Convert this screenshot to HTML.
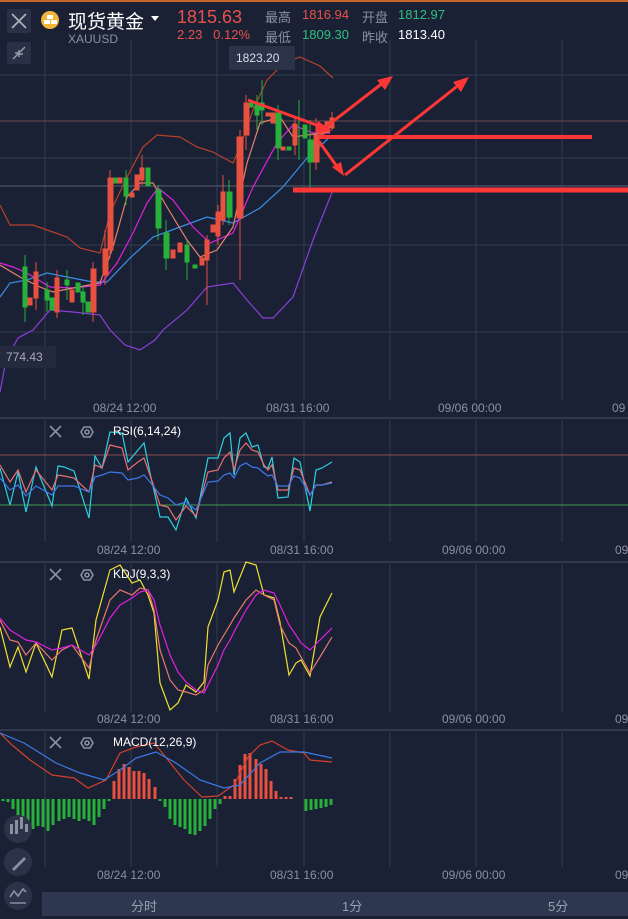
<!DOCTYPE html>
<html><head><meta charset="utf-8"><style>
*{margin:0;padding:0}
body{width:628px;height:919px;background:#1b2135;overflow:hidden;position:relative;font-family:"Liberation Sans","Noto Sans CJK SC",sans-serif}
.t{position:absolute;white-space:nowrap}
</style></head><body>
<svg width="628" height="919" style="position:absolute;left:0;top:0">
<rect x="0" y="0" width="628" height="2" fill="#c8662a"/>
<g stroke="#323a50" stroke-width="1">
<line x1="45" y1="40" x2="45" y2="400"/><line x1="131" y1="40" x2="131" y2="400"/><line x1="217" y1="40" x2="217" y2="400"/><line x1="304" y1="40" x2="304" y2="400"/><line x1="390" y1="40" x2="390" y2="400"/><line x1="476" y1="40" x2="476" y2="400"/><line x1="562" y1="40" x2="562" y2="400"/>
<line x1="45" y1="420" x2="45" y2="542"/><line x1="131" y1="420" x2="131" y2="542"/><line x1="217" y1="420" x2="217" y2="542"/><line x1="304" y1="420" x2="304" y2="542"/><line x1="390" y1="420" x2="390" y2="542"/><line x1="476" y1="420" x2="476" y2="542"/><line x1="562" y1="420" x2="562" y2="542"/>
<line x1="45" y1="564" x2="45" y2="712"/><line x1="131" y1="564" x2="131" y2="712"/><line x1="217" y1="564" x2="217" y2="712"/><line x1="304" y1="564" x2="304" y2="712"/><line x1="390" y1="564" x2="390" y2="712"/><line x1="476" y1="564" x2="476" y2="712"/><line x1="562" y1="564" x2="562" y2="712"/>
<line x1="45" y1="732" x2="45" y2="867"/><line x1="131" y1="732" x2="131" y2="867"/><line x1="217" y1="732" x2="217" y2="867"/><line x1="304" y1="732" x2="304" y2="867"/><line x1="390" y1="732" x2="390" y2="867"/><line x1="476" y1="732" x2="476" y2="867"/><line x1="562" y1="732" x2="562" y2="867"/>
<line x1="0" y1="75" x2="628" y2="75"/><line x1="0" y1="158" x2="628" y2="158"/><line x1="0" y1="245" x2="628" y2="245"/><line x1="0" y1="332" x2="628" y2="332"/>
</g>
<line x1="0" y1="121" x2="628" y2="121" stroke="#6a4a50"/>
<line x1="0" y1="186" x2="628" y2="186" stroke="#5a6075"/>
<g stroke="#4a5166"><line x1="0" y1="418" x2="628" y2="418"/><line x1="0" y1="562" x2="628" y2="562"/><line x1="0" y1="730" x2="628" y2="730"/></g>
<line x1="0" y1="455" x2="628" y2="455" stroke="#8a4a50"/>
<line x1="0" y1="505" x2="628" y2="505" stroke="#3f9a4a"/>

<g fill="none" stroke-width="1.2">
<polyline stroke="#b8402a" points="0,205 10,225 33,225 67,237 80,248 100,253 110,213 127,177 143,147 157,135 180,137 197,147 213,152 233,163 240,147 253,110 267,80 285,62 300,57 320,66 333,78"/>
<polyline stroke="#8a3fd8" points="0,392 6,360 18,338 33,330 50,310 73,312 100,315 110,330 125,345 140,350 155,340 163,330 187,310 207,287 233,283 247,300 263,318 273,318 293,297 313,240 333,190"/>
<polyline stroke="#3a8ee8" points="0,297 10,283 27,280 47,273 67,277 93,282 107,282 130,258 153,237 180,227 207,217 233,223 260,208 283,187 307,158 330,137"/>
<polyline stroke="#e020e0" points="0,263 13,267 27,273 50,287 73,288 100,285 117,263 133,233 147,203 158,188 173,200 193,227 210,243 233,233 253,187 277,143 293,125 313,133 330,133"/>
<polyline stroke="#e88070" points="0,265 20,277 40,287 53,292 73,288 100,283 113,247 127,197 140,183 153,183 167,207 187,240 200,257 217,250 233,227 247,163 260,123 280,117 293,137 307,135 330,132"/>
</g>
<g stroke="#27b03a" fill="#27b03a" stroke-width="1">
<line x1="25" y1="255" x2="25" y2="322"/><rect x="23" y="267" width="4" height="40"/>
<rect x="45" y="290" width="4" height="10"/><line x1="47" y1="282" x2="47" y2="312"/>
<rect x="50" y="298" width="4" height="12"/>
<rect x="65" y="280" width="4" height="5"/><line x1="67" y1="270" x2="67" y2="300"/>
<rect x="76" y="283" width="4" height="9"/><rect x="81" y="292" width="4" height="10"/><rect x="86" y="302" width="4" height="10"/><line x1="83" y1="285" x2="83" y2="315"/>
<rect x="113" y="178" width="4" height="5"/><rect x="124" y="178" width="4" height="18"/><line x1="126" y1="170" x2="126" y2="205"/>
<rect x="146" y="168" width="4" height="18"/>
<line x1="158" y1="185" x2="158" y2="240"/><rect x="156" y="190" width="5" height="38"/>
<line x1="166" y1="220" x2="166" y2="270"/><rect x="164" y="233" width="5" height="25"/>
<rect x="185" y="245" width="4" height="17"/><line x1="187" y1="240" x2="187" y2="280"/>
<rect x="193" y="265" width="4" height="3"/>
<rect x="227" y="192" width="5" height="25"/><line x1="229" y1="180" x2="229" y2="225"/>
<rect x="249" y="103" width="4" height="4"/><rect x="255" y="103" width="4" height="12"/><line x1="257" y1="95" x2="257" y2="130"/><rect x="260" y="103" width="4" height="7"/><line x1="262" y1="80" x2="262" y2="125"/>
<line x1="278" y1="105" x2="278" y2="160"/><rect x="276" y="113" width="5" height="35"/>
<rect x="287" y="147" width="4" height="3"/><line x1="299" y1="100" x2="299" y2="160"/>
<rect x="303" y="125" width="4" height="13"/><line x1="310" y1="120" x2="310" y2="188"/><rect x="308" y="140" width="5" height="22"/>
</g>
<g stroke="#e8503f" fill="#e8503f" stroke-width="1">
<rect x="28" y="298" width="4" height="7"/><rect x="34" y="272" width="4" height="26"/><line x1="36" y1="262" x2="36" y2="310"/>
<line x1="57" y1="270" x2="57" y2="318"/><rect x="55" y="278" width="4" height="34"/>
<rect x="70" y="290" width="4" height="12"/>
<line x1="93" y1="262" x2="93" y2="322"/><rect x="91" y="269" width="5" height="43"/>
<line x1="105" y1="230" x2="105" y2="285"/><rect x="103" y="249" width="5" height="26"/>
<line x1="110" y1="170" x2="110" y2="258"/><rect x="108" y="178" width="5" height="72"/>
<rect x="118" y="178" width="4" height="5"/><rect x="130" y="193" width="4" height="4"/><rect x="135" y="175" width="4" height="15"/>
<line x1="142" y1="155" x2="142" y2="185"/><rect x="140" y="168" width="4" height="12"/>
<rect x="171" y="250" width="4" height="8"/><rect x="178" y="243" width="4" height="9"/>
<rect x="200" y="258" width="4" height="7"/><line x1="207" y1="235" x2="207" y2="305"/><rect x="205" y="240" width="4" height="20"/>
<rect x="211" y="225" width="4" height="7"/><line x1="218" y1="205" x2="218" y2="245"/><rect x="216" y="212" width="4" height="24"/>
<line x1="223" y1="175" x2="223" y2="225"/><rect x="221" y="192" width="4" height="28"/>
<line x1="240" y1="130" x2="240" y2="280"/><rect x="237" y="137" width="6" height="81"/>
<line x1="246" y1="95" x2="246" y2="150"/><rect x="244" y="103" width="5" height="32"/>
<rect x="266" y="113" width="4" height="3"/><rect x="271" y="113" width="4" height="10"/>
<rect x="281" y="147" width="4" height="3"/>
<line x1="295" y1="118" x2="295" y2="155"/><rect x="293" y="124" width="4" height="21"/>
<line x1="316" y1="118" x2="316" y2="170"/><rect x="314" y="135" width="5" height="27"/>
<rect x="320" y="128" width="4" height="7"/><rect x="325" y="122" width="4" height="10"/><rect x="330" y="118" width="4" height="10"/><line x1="332" y1="112" x2="332" y2="130"/>
</g>
<g stroke="#ff3636" stroke-width="3" fill="#ff3636">
<line x1="318" y1="137" x2="592" y2="137" stroke-width="4"/>
<line x1="293" y1="190" x2="628" y2="190" stroke-width="5"/>
<line x1="248" y1="100" x2="322" y2="127"/><polygon points="332,131 318,121 315,132" stroke="none"/>
<line x1="318" y1="133" x2="384" y2="82"/><polygon points="393,76 377,80 385,90" stroke="none"/>
<line x1="318" y1="140" x2="338" y2="168"/><polygon points="344,176 332,167 341,162" stroke="none"/>
<line x1="345" y1="175" x2="460" y2="84"/><polygon points="469,77 453,82 461,92" stroke="none"/>
</g>
<rect x="229" y="46" width="66" height="24" rx="2" fill="#2b3349"/>
<rect x="0" y="346" width="56" height="22" fill="#232a3e"/>

<g fill="none" stroke-width="1.2">
<polyline stroke="#2ad0e0" points="0,468 10,505 18,472 26,512 36,467 52,506 58,466 64,467 74,471 89,518 95,456 102,468 110,432 122,433 128,462 138,450 144,443 150,473 160,517 168,517 176,530 186,498 196,518 208,458 218,458 224,438 230,433 234,475 240,438 246,433 252,447 258,445 264,467 268,468 272,457 278,498 288,497 294,458 300,462 310,511 316,470 322,468 332,462"/>
<polyline stroke="#e87070" points="0,465 10,482 18,470 26,492 36,470 52,490 58,475 64,476 74,478 89,492 95,465 102,468 110,445 122,448 128,470 138,462 144,458 150,475 160,505 168,507 176,520 186,506 196,516 208,472 218,470 224,458 230,452 234,470 240,450 246,443 252,450 258,452 264,465 268,470 272,465 278,490 288,490 294,468 300,470 310,495 316,485 322,485 332,482"/>
<polyline stroke="#3a7ae8" points="0,478 10,490 18,485 26,496 36,486 52,495 58,486 64,486 74,486 89,492 95,477 102,475 110,472 122,473 128,480 138,478 144,475 150,482 160,495 168,498 176,505 186,502 196,510 208,482 218,481 224,475 230,473 234,478 240,466 246,463 252,467 258,468 264,473 268,476 272,475 278,486 288,486 294,476 300,478 310,495 316,485 322,485 332,483"/>
</g>
<g fill="none" stroke-width="1.2">
<polyline stroke="#f0e030" points="0,627 10,667 18,647 26,672 36,643 52,677 62,630 72,628 89,679 96,620 110,570 120,565 132,583 140,580 148,595 154,613 160,683 170,710 178,703 186,685 196,692 204,682 208,627 218,600 224,572 230,570 234,592 246,562 256,565 264,595 274,598 280,622 289,675 296,663 301,660 310,676 320,617 332,593"/>
<polyline stroke="#e87870" points="0,620 10,640 18,642 26,655 36,643 52,660 62,650 72,645 89,668 96,640 110,600 120,590 132,595 140,588 148,590 154,610 160,650 170,680 178,690 186,692 196,695 204,690 208,665 218,645 224,635 230,625 234,618 246,600 256,590 264,595 274,600 280,625 289,643 296,648 301,657 310,673 320,657 332,637"/>
<polyline stroke="#e020e0" points="0,618 10,630 18,635 26,640 36,642 52,650 62,648 72,645 89,655 96,645 110,618 120,605 132,598 140,592 148,590 154,600 160,625 170,655 178,672 186,682 196,690 204,693 208,685 218,665 224,650 230,640 234,632 246,610 256,595 264,590 274,593 280,605 289,625 296,635 301,643 310,650 320,640 332,628"/>
</g>
<path stroke="#27b03a" stroke-width="3" d="M3,799v2M8,799v3M13,799v10M18,799v18M23,799v25M28,799v28M33,799v30M38,799v27M43,799v28M48,799v32M53,799v26M59,799v22M64,799v20M69,799v18M74,799v20M79,799v22M84,799v20M89,799v22M94,799v26M99,799v18M104,799v10M109,799v2M160,799v2M165,799v8M170,799v20M175,799v26M180,799v28M185,799v30M190,799v35M195,799v36M200,799v32M205,799v27M210,799v20M215,799v10M220,799v5M306,799v12M311,799v11M316,799v10M321,799v9M326,799v8M331,799v6"/>
<path stroke="#e8503f" stroke-width="3" d="M114,799v-18M119,799v-30M124,799v-35M129,799v-32M134,799v-28M139,799v-28M144,799v-26M149,799v-20M155,799v-12M225,799v-3M230,799v-3M235,799v-20M240,799v-34M245,799v-45M250,799v-46M256,799v-40M261,799v-35M266,799v-30M271,799v-18M276,799v-8M281,799v-2M286,799v-2M291,799v-2"/>
<g fill="none" stroke-width="1.2">
<polyline stroke="#d0402a" points="0,733 12,745 30,760 52,775 74,778 88,788 106,780 120,753 136,747 154,743 168,760 184,780 202,797 218,796 234,785 248,757 260,745 272,741 288,750 304,753 310,760 332,762"/>
<polyline stroke="#3a7ae8" points="0,733 24,743 56,763 80,773 104,780 120,770 136,758 156,752 176,763 200,780 224,788 240,785 260,763 280,752 304,752 332,758"/>
</g>
<g stroke="#8a90a2" stroke-width="1.6" fill="none">
<path d="M50,426l11,11M61,426l-11,11"/><path d="M50,569l11,11M61,569l-11,11"/><path d="M50,737l11,11M61,737l-11,11"/>
<polygon points="81,432 84,427 90,427 93,432 90,437 84,437"/><circle cx="87" cy="432" r="2"/>
<polygon points="81,575 84,570 90,570 93,575 90,580 84,580"/><circle cx="87" cy="575" r="2"/>
<polygon points="81,743 84,738 90,738 93,743 90,748 84,748"/><circle cx="87" cy="743" r="2"/>
</g>
<rect x="7" y="9" width="24" height="24" rx="2" fill="#2a3146"/>
<path d="M12,14l14,14M26,14l-14,14" stroke="#aab0bd" stroke-width="1.8"/>
<rect x="7" y="42" width="24" height="22" rx="2" fill="#2a3146"/>
<path d="M13,59l5,-5M25,47l-5,5M15,53h4v4M23,54h-4v-4" stroke="#9aa0ad" stroke-width="1.4" fill="none"/>
<circle cx="50" cy="20" r="9" fill="#f2b43a"/>
<rect x="47" y="15" width="6" height="4" fill="#fff"/><rect x="44" y="20" width="6" height="4" fill="#fff"/><rect x="51" y="20" width="6" height="4" fill="#fff"/>
<polygon points="151,16 159,16 155,21" fill="#fff"/>
<circle cx="18" cy="829" r="14" fill="#2c3348"/><circle cx="18" cy="862" r="14" fill="#2c3348"/><circle cx="18" cy="896" r="14" fill="#2c3348"/>
<g fill="#8a90a2"><rect x="10" y="824" width="3" height="10"/><rect x="15" y="820" width="3" height="14"/><rect x="20" y="817" width="3" height="12"/><rect x="25" y="824" width="3" height="8"/></g>
<path d="M12,869l12,-12l2,2l-12,12z" fill="#8a90a2"/>
<path d="M10,897l4,-6l4,5l5,-7l3,3M10,903h16" stroke="#8a90a2" stroke-width="1.6" fill="none"/>
<rect x="42" y="892" width="586" height="24" fill="#2d3750"/>
</svg>
<div class="t" style="left:68px;top:7px;font-size:19px;color:#fff">现货黄金</div>
<div class="t" style="left:68px;top:32px;font-size:12px;color:#8a90a0">XAUUSD</div>
<div class="t" style="left:177px;top:7px;font-size:18px;color:#e8504a">1815.63</div>
<div class="t" style="left:177px;top:27px;font-size:13px;color:#e8504a">2.23&nbsp;&nbsp;&nbsp;0.12%</div>
<div class="t" style="left:265px;top:7px;font-size:13px;color:#8a90a0">最高</div>
<div class="t" style="left:302px;top:7px;font-size:13px;color:#e8504a">1816.94</div>
<div class="t" style="left:362px;top:7px;font-size:13px;color:#8a90a0">开盘</div>
<div class="t" style="left:398px;top:7px;font-size:13px;color:#2cc080">1812.97</div>
<div class="t" style="left:265px;top:27px;font-size:13px;color:#8a90a0">最低</div>
<div class="t" style="left:302px;top:27px;font-size:13px;color:#2cc080">1809.30</div>
<div class="t" style="left:362px;top:27px;font-size:13px;color:#8a90a0">昨收</div>
<div class="t" style="left:398px;top:27px;font-size:13px;color:#fff">1813.40</div>
<div class="t" style="left:236px;top:51px;font-size:12px;color:#dde">1823.20</div>
<div class="t" style="left:6px;top:350px;font-size:12px;color:#aab">774.43</div>
<div class="t" style="left:93px;top:401px;font-size:12px;color:#8a90a0">08/24 12:00</div>
<div class="t" style="left:266px;top:401px;font-size:12px;color:#8a90a0">08/31 16:00</div>
<div class="t" style="left:438px;top:401px;font-size:12px;color:#8a90a0">09/06 00:00</div>
<div class="t" style="left:612px;top:401px;font-size:12px;color:#8a90a0">09</div>
<div class="t" style="left:113px;top:424px;font-size:12px;color:#fff">RSI(6,14,24)</div>
<div class="t" style="left:97px;top:543px;font-size:12px;color:#8a90a0">08/24 12:00</div>
<div class="t" style="left:270px;top:543px;font-size:12px;color:#8a90a0">08/31 16:00</div>
<div class="t" style="left:442px;top:543px;font-size:12px;color:#8a90a0">09/06 00:00</div>
<div class="t" style="left:615px;top:543px;font-size:12px;color:#8a90a0">09</div>
<div class="t" style="left:113px;top:567px;font-size:12px;color:#fff">KDJ(9,3,3)</div>
<div class="t" style="left:97px;top:712px;font-size:12px;color:#8a90a0">08/24 12:00</div>
<div class="t" style="left:270px;top:712px;font-size:12px;color:#8a90a0">08/31 16:00</div>
<div class="t" style="left:442px;top:712px;font-size:12px;color:#8a90a0">09/06 00:00</div>
<div class="t" style="left:615px;top:712px;font-size:12px;color:#8a90a0">09</div>
<div class="t" style="left:113px;top:735px;font-size:12px;color:#fff">MACD(12,26,9)</div>
<div class="t" style="left:97px;top:868px;font-size:12px;color:#8a90a0">08/24 12:00</div>
<div class="t" style="left:270px;top:868px;font-size:12px;color:#8a90a0">08/31 16:00</div>
<div class="t" style="left:442px;top:868px;font-size:12px;color:#8a90a0">09/06 00:00</div>
<div class="t" style="left:615px;top:868px;font-size:12px;color:#8a90a0">09</div>
<div class="t" style="left:131px;top:896px;font-size:13px;color:#9aa0b0">分时</div>
<div class="t" style="left:342px;top:896px;font-size:13px;color:#9aa0b0">1分</div>
<div class="t" style="left:548px;top:896px;font-size:13px;color:#9aa0b0">5分</div>
</body></html>
